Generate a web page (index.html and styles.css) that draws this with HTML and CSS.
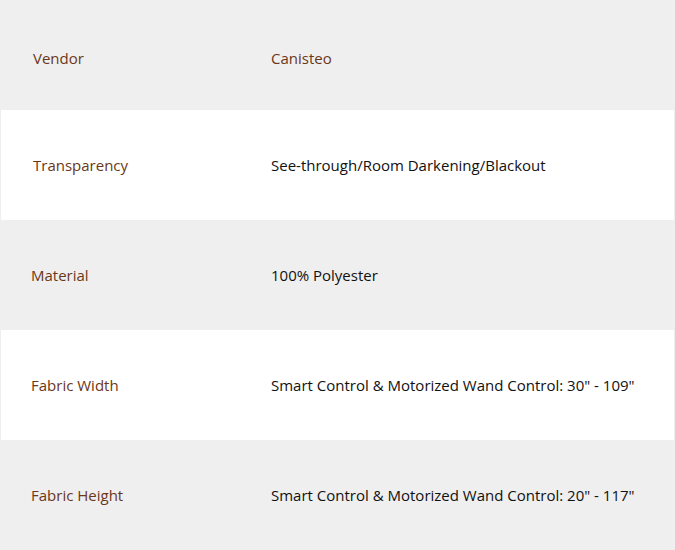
FILE: index.html
```html
<!DOCTYPE html>
<html>
<head>
<meta charset="utf-8">
<link rel="stylesheet" href="styles.css">
</head>
<body>
<div class="specs">
  <div class="row row-gray row-first"><div class="label">Vendor</div><div class="value value-brand">Canisteo</div></div>
  <div class="row row-white"><div class="label">Transparency</div><div class="value">See-through/Room Darkening/Blackout</div></div>
  <div class="row row-gray"><div class="label label-tight">Material</div><div class="value">100% Polyester</div></div>
  <div class="row row-white"><div class="label label-tight">Fabric Width</div><div class="value">Smart Control &amp; Motorized Wand Control: 30" - 109"</div></div>
  <div class="row row-gray"><div class="label label-tight">Fabric Height</div><div class="value">Smart Control &amp; Motorized Wand Control: 20" - 117"</div></div>
</div>
</body>
</html>
```
FILE: styles.css
```css
html, body {
  margin: 0;
  padding: 0;
  background: #ffffff;
}
.specs {
  width: 675px;
  font-family: "Open Sans", "Segoe UI", sans-serif;
  font-size: 15px;
}
.row {
  display: grid;
  grid-template-columns: 271px 1fr;
  align-items: center;
  height: 110px;
  box-sizing: border-box;
}
.row-gray {
  background: #efefef;
}
.row-white {
  background: #ffffff;
  border-left: 1px solid #efefef;
  border-right: 1px solid #efefef;
  grid-template-columns: 270px 1fr;
}
.row-first {
  padding-top: 6px;
}
.label {
  padding-left: 33px;
  color: #6a3719;
}
.row-white .label {
  padding-left: 32px;
}
.row .label-tight {
  padding-left: 31px;
}
.row-white .label-tight {
  padding-left: 30px;
}
.value {
  color: #111111;
}
.value-brand {
  color: #6a3719;
}
```
